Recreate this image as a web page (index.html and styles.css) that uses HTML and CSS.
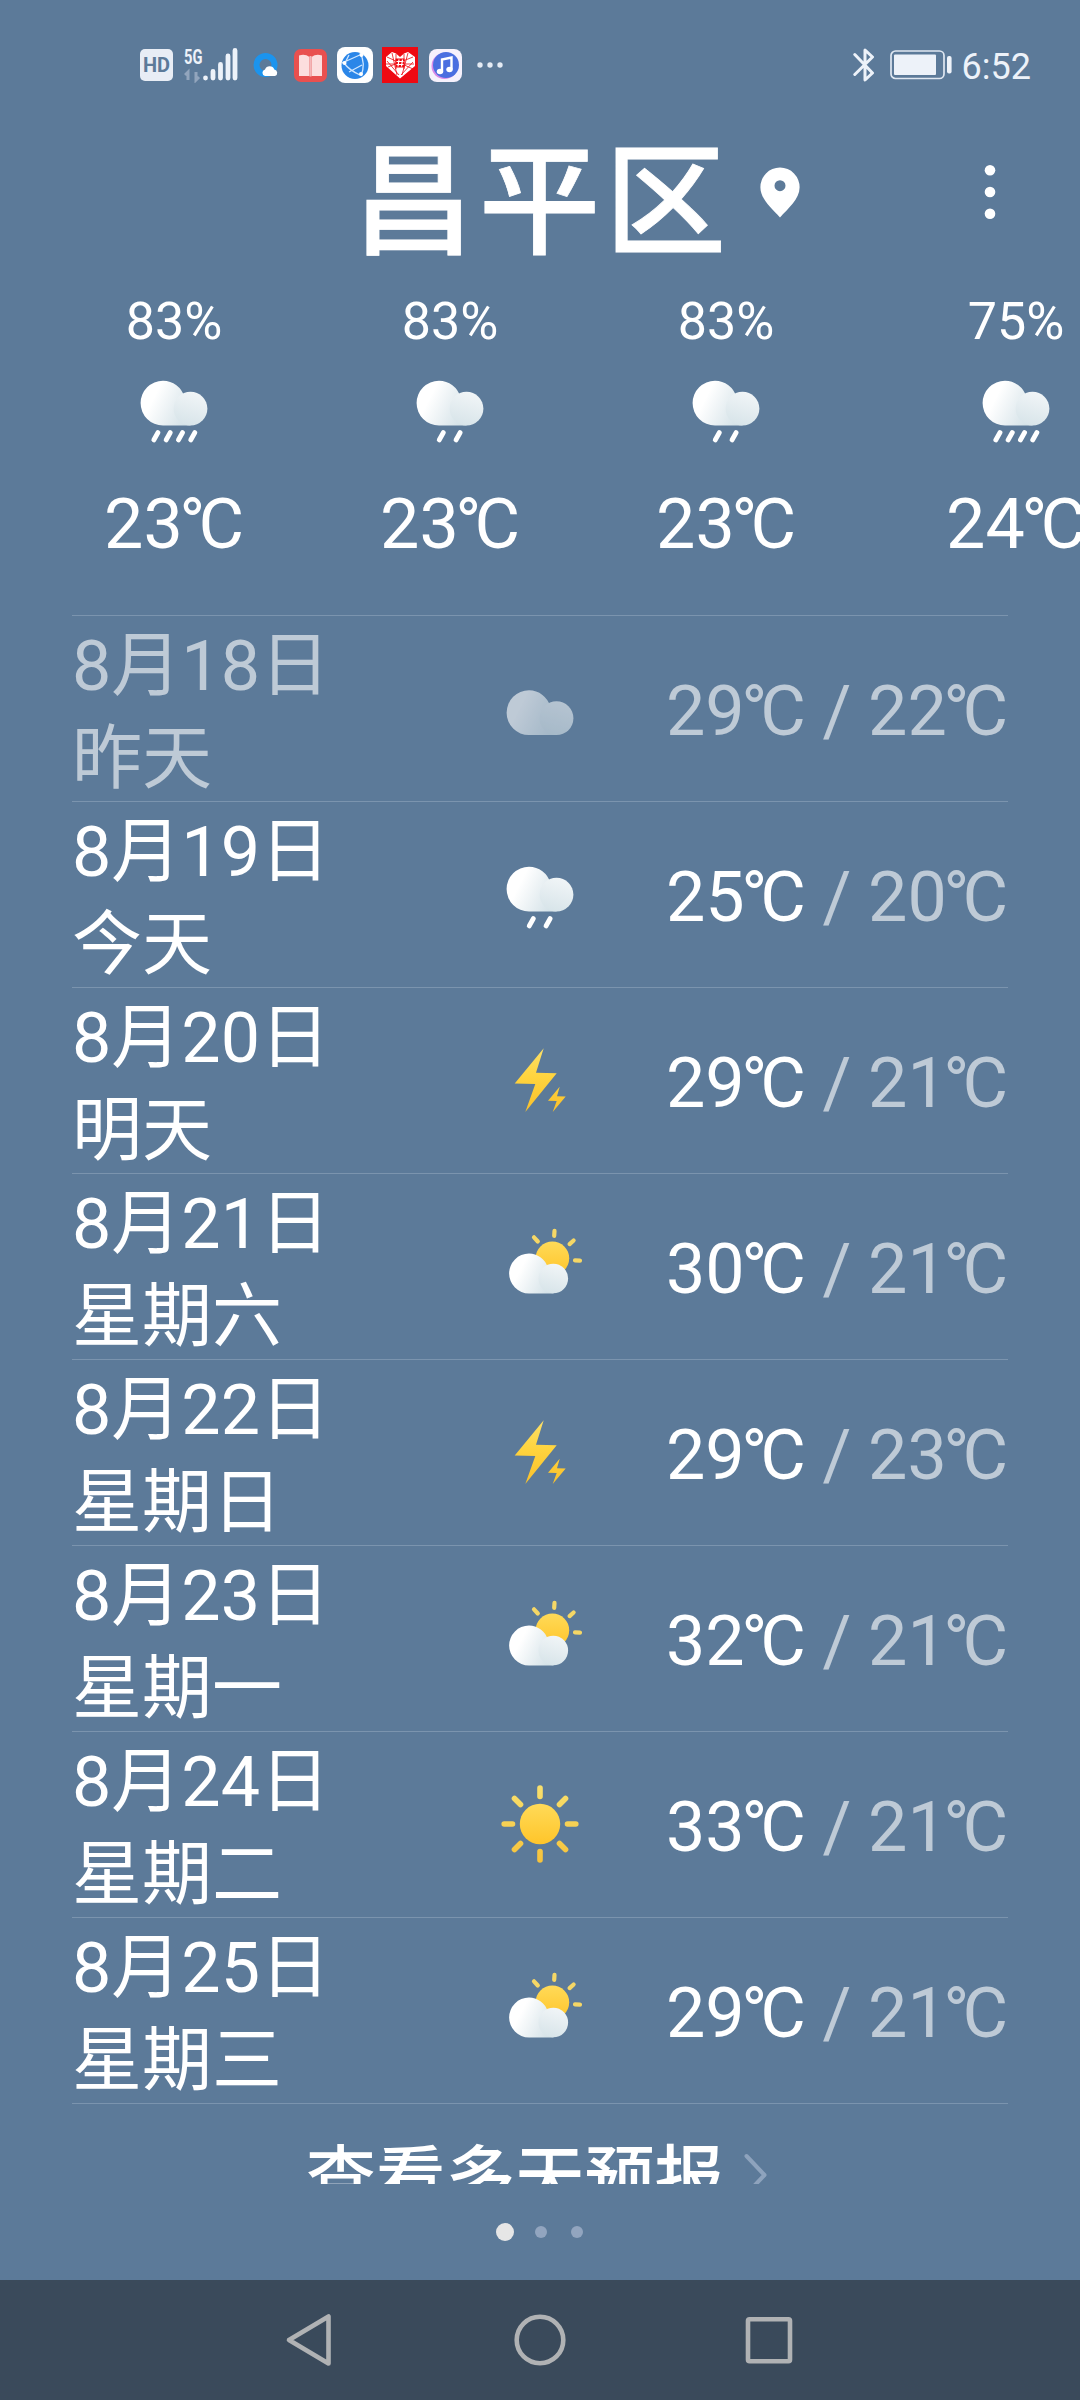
FILE: index.html
```html
<!DOCTYPE html>
<html lang="zh-CN">
<head>
<meta charset="utf-8">
<title>昌平区</title>
<link rel="stylesheet" href="styles.css">
</head>
<body>
<svg class="defs" width="0" height="0" aria-hidden="true">
  <defs>
    <linearGradient id="gMain" x1="0" y1="0.3" x2="1" y2="0.75"><stop offset="0.25" stop-color="#fff"/><stop offset="1" stop-color="#d3e1e7"/></linearGradient>
    <linearGradient id="gSmall" x1="0.6" y1="0" x2="0.3" y2="1"><stop offset="0" stop-color="#f1f5f7"/><stop offset="1" stop-color="#d7e4e9"/></linearGradient>
    <linearGradient id="gSun" x1="0" y1="0" x2="0" y2="1"><stop offset="0" stop-color="#ffda58"/><stop offset="1" stop-color="#ffc52a"/></linearGradient>
    <linearGradient id="gBolt" gradientUnits="userSpaceOnUse" x1="0" y1="16" x2="0" y2="80"><stop offset="0" stop-color="#fbe06a"/><stop offset="0.45" stop-color="#ffd43e"/><stop offset="1" stop-color="#f9c02c"/></linearGradient>
    <linearGradient id="gRays" gradientUnits="userSpaceOnUse" x1="0" y1="9" x2="0" y2="87"><stop offset="0" stop-color="#f8e06e"/><stop offset="1" stop-color="#f6c23a"/></linearGradient>
  </defs>
  <symbol id="cloud" viewBox="0 0 96 96">
    <path d="M37 20.7a22.4 22.4 0 0 0 0 44.8H64.5V48.5L58.4 37A22.4 22.4 0 0 0 37 20.7z" fill="url(#gMain)"/>
    <circle cx="64.5" cy="48.6" r="16.9" fill="url(#gSmall)"/>
  </symbol>
  <symbol id="overcast" viewBox="0 0 96 96"><use href="#cloud" y="9.6" width="96" height="96"/></symbol>
  <symbol id="light-rain" viewBox="0 0 96 96">
    <use href="#cloud" width="96" height="96"/>
    <path d="M41.4 72.5l-4.2 7.5M58.2 72.5l-4.2 7.5" stroke="#fff" stroke-width="4.8" stroke-linecap="round"/>
  </symbol>
  <symbol id="rain" viewBox="0 0 96 96">
    <use href="#cloud" width="96" height="96"/>
    <path d="M32 72.5l-4.2 7.5M44.3 72.5l-4.2 7.5M56.6 72.5l-4.2 7.5M68.9 72.5l-4.2 7.5" stroke="#fff" stroke-width="4.8" stroke-linecap="round"/>
  </symbol>
  <symbol id="bolt" viewBox="0 0 96 96">
    <path d="M51.7 16.3L44 40.7l20.7.6L33.3 80l10-28L22.7 51.5zM67.7 54.7L65 64.3l8.7.3L60.7 80l4-11-8.7-.3z" fill="url(#gBolt)"/>
  </symbol>
  <symbol id="partly" viewBox="0 0 96 96">
    <path d="M62.5 12.8l-.3 5M42 19.3l3.8 4.2M81.6 22.5l-4 3.6M83 42.3l5 .4" stroke="#f5d766" stroke-width="4.2" stroke-linecap="round"/>
    <circle cx="60.4" cy="40.3" r="16.8" fill="url(#gSun)"/>
    <path d="M37 35.6a19.9 19.9 0 0 0 0 39.8H61.5V60.5L55.6 49A19.9 19.9 0 0 0 37 35.6z" fill="url(#gMain)"/>
    <circle cx="61.3" cy="60.5" r="14.8" fill="url(#gSmall)"/>
  </symbol>
  <symbol id="sunny" viewBox="0 0 96 96">
    <circle cx="48" cy="48" r="20.2" fill="url(#gSun)"/>
    <path d="M48.01 12L48 20.5M48.01 75.5L48 84M12.2 48h8.3M75.5 48h8.3M22.5 22.5l6 6M73.5 22.5l-6 6M22.5 73.5l6-6M73.5 73.5l-6-6" stroke="url(#gRays)" stroke-width="5.6" stroke-linecap="round"/>
  </symbol>
</svg>

<div class="screen">
  <div class="status">
    <span class="hd">HD</span>
    <span class="net">
      <span class="net-type">5G</span>
      <svg class="signal" width="54" height="36" viewBox="0 0 54 36"><path d="M4 33v-8l-3 3M12 25v8l3-3" fill="none" stroke="#92a5bd" stroke-width="3"/><path d="M22.5 31v.1M30 24.5v6.5M37.5 17.5v13.5M45 9v22M52 3.5v27.5" transform="translate(-1)" stroke="#edf2f9" stroke-width="4.8" stroke-linecap="round"/></svg>
    </span>
    <svg class="app app-search" width="26" height="26" viewBox="0 0 26 26"><circle cx="12.5" cy="13" r="9" fill="none" stroke="#1b94ee" stroke-width="6"/><path d="M12 24a3.4 3.4 0 0 1 0-6.6 5 5 0 0 1 9.3.2A3.3 3.3 0 0 1 22 24z" fill="#fff"/></svg>
    <svg class="app app-book" width="33" height="33" viewBox="0 0 33 33"><rect width="33" height="33" rx="7" fill="#e9504f"/><path d="M5 6.5q6-2 10.5 1.5v19H5zM28 6.5q-6-2-10.5 1.5v19H28z" fill="#fcdede"/><path d="M15.5 7h2v20.5h-2z" fill="#f3b7b9"/></svg>
    <svg class="app app-browser" width="36" height="36" viewBox="0 0 36 36"><rect width="36" height="36" rx="8" fill="#fff"/><circle cx="18" cy="18.5" r="13.5" fill="#2b86e8"/><path d="M5 16L25 7M7 16q5 7 16 12M23 6q6 10 1 23M12 25l13-7M12 8l-4 8" fill="none" stroke="#cfe6ff" stroke-width="1.3"/><g fill="#fff"><circle cx="7.5" cy="16" r="2"/><circle cx="24.5" cy="8" r="2"/><circle cx="24" cy="27" r="2"/></g></svg>
    <svg class="app app-heart" width="36" height="36" viewBox="0 0 36 36"><rect width="36" height="36" fill="#ee0a12"/><path d="M18 31.5L4 19V10l6-5 4 1.5 4 3.5 4-3.5L26 5l7 5v9z" fill="#fff"/><path d="M5 14l12 14M5 10l26 12M31 10L6 20M31 15L19 28M10 6l5 22M26 6l-6 22M14 7v15M22 7v15M4 17h28" stroke="#ee0a12" stroke-width="0.8"/><path d="M13.5 11.5h9v9h-9z" fill="#ee0a12"/><path d="M17 12.5l-1 7M20.5 12.5l-1 7M14.5 14.5h7M14.5 17.5h7" stroke="#fff" stroke-width="1.2"/></svg>
    <svg class="app app-music" width="33" height="33" viewBox="0 0 33 33"><rect width="33" height="33" rx="8" fill="#f6f1fc"/><circle cx="15.5" cy="17" r="13" fill="#d88ae8"/><circle cx="17" cy="16" r="13" fill="#4a6fe0"/><path d="M13 22.5V10.5l9.5-2v12" fill="none" stroke="#fff" stroke-width="2.4"/><ellipse cx="11" cy="22.5" rx="3.2" ry="2.8" fill="#fff"/><ellipse cx="20.5" cy="20.5" rx="3.2" ry="2.8" fill="#fff"/></svg>
    <svg class="more" width="26" height="6" viewBox="0 0 26 6" fill="#e4ebf4"><circle cx="3" cy="3" r="2.7"/><circle cx="13" cy="3" r="2.7"/><circle cx="23" cy="3" r="2.7"/></svg>
    <span class="spacer"></span>
    <svg class="bt" width="22" height="36" viewBox="0 0 22 36" fill="none" stroke="#edf2f9" stroke-width="3" stroke-linecap="round" stroke-linejoin="round"><path d="M1.8 7.5L19.5 26 12 33V3l7.5 7L1.8 27.5"/></svg>
    <svg class="battery" width="62" height="30" viewBox="0 0 62 30"><rect x="1" y="1" width="53" height="27.5" rx="4.5" fill="none" stroke="#dfe7f1" stroke-width="1.7"/><rect x="4" y="4.5" width="42" height="20.5" rx="1" fill="#edf2f9"/><rect x="57" y="6" width="4.6" height="17.5" rx="2" fill="#edf2f9"/></svg>
    <span class="clock">6:52</span>
  </div>

  <div class="header">
    <h1 class="city">昌平区</h1>
    <svg class="pin" width="40" height="51" viewBox="0 0 40 51"><path fill="#fff" fill-rule="evenodd" d="M20 .5A19.6 19.6 0 0 0 .4 20.5C.4 32 12 41.5 20 50.5 28 41.5 39.6 32 39.6 20.5A19.6 19.6 0 0 0 20 .5zM20 13.2a5.5 5.5 0 1 1 0 11 5.5 5.5 0 0 1 0-11z"/></svg>
    <svg class="menu" width="12" height="56" viewBox="0 0 12 56" fill="#fff"><circle cx="6" cy="6.3" r="5.3"/><circle cx="6" cy="28" r="5.3"/><circle cx="6" cy="49.7" r="5.3"/></svg>
  </div>

  <div class="hourly">
    <div class="hour"><span class="chance">83%</span><svg class="wx"><use href="#rain"/></svg><span class="deg">23<span class="unit">°C</span></span></div>
    <div class="hour"><span class="chance">83%</span><svg class="wx"><use href="#light-rain"/></svg><span class="deg">23<span class="unit">°C</span></span></div>
    <div class="hour"><span class="chance">83%</span><svg class="wx"><use href="#light-rain"/></svg><span class="deg">23<span class="unit">°C</span></span></div>
    <div class="hour hour-wide"><span class="chance">75%</span><svg class="wx"><use href="#rain"/></svg><span class="deg">24<span class="unit">°C</span></span></div>
  </div>

  <div class="daily">
    <div class="day past"><div class="date">8月18日<br>昨天</div><svg class="wx"><use href="#overcast"/></svg><div class="range">29<span class="unit">°C</span><span class="low"> / 22<span class="unit">°C</span></span></div></div>
    <div class="day"><div class="date">8月19日<br>今天</div><svg class="wx"><use href="#light-rain"/></svg><div class="range">25<span class="unit">°C</span><span class="low"> / 20<span class="unit">°C</span></span></div></div>
    <div class="day"><div class="date">8月20日<br>明天</div><svg class="wx"><use href="#bolt"/></svg><div class="range">29<span class="unit">°C</span><span class="low"> / 21<span class="unit">°C</span></span></div></div>
    <div class="day"><div class="date">8月21日<br>星期六</div><svg class="wx"><use href="#partly"/></svg><div class="range">30<span class="unit">°C</span><span class="low"> / 21<span class="unit">°C</span></span></div></div>
    <div class="day"><div class="date">8月22日<br>星期日</div><svg class="wx"><use href="#bolt"/></svg><div class="range">29<span class="unit">°C</span><span class="low"> / 23<span class="unit">°C</span></span></div></div>
    <div class="day"><div class="date">8月23日<br>星期一</div><svg class="wx"><use href="#partly"/></svg><div class="range">32<span class="unit">°C</span><span class="low"> / 21<span class="unit">°C</span></span></div></div>
    <div class="day"><div class="date">8月24日<br>星期二</div><svg class="wx"><use href="#sunny"/></svg><div class="range">33<span class="unit">°C</span><span class="low"> / 21<span class="unit">°C</span></span></div></div>
    <div class="day"><div class="date">8月25日<br>星期三</div><svg class="wx"><use href="#partly"/></svg><div class="range">29<span class="unit">°C</span><span class="low"> / 21<span class="unit">°C</span></span></div></div>
  </div>

  <div class="forecast-link">
    <span class="link-text">查看多天预报</span>
    <svg class="chevron" width="24" height="44" viewBox="0 0 24 44"><path d="M2.5 3L20.5 22 2.5 41" fill="none" stroke="#8ea3bd" stroke-width="4" stroke-linecap="round" stroke-linejoin="round"/></svg>
  </div>

  <div class="pager"><i class="dot current"></i><i class="dot"></i><i class="dot"></i></div>

  <div class="navbar">
    <svg class="back" width="48" height="56" viewBox="0 0 48 56"><path d="M43.5 4.5v47L4 28z"/></svg>
    <svg class="home" width="56" height="56" viewBox="0 0 56 56"><circle cx="28" cy="28" r="23.3"/></svg>
    <svg class="recent" width="56" height="56" viewBox="0 0 56 56"><rect x="7" y="7.2" width="42" height="42" rx="1.5"/></svg>
  </div>
</div>
</body>
</html>
```
FILE: styles.css
```css
* { box-sizing: border-box; }

body {
  margin: 0;
  background: #5c7a99;
  color: #fff;
  font-family: Roboto, "Noto Sans CJK SC", sans-serif;
}

.defs { position: absolute; }

.screen {
  width: 1080px;
  height: 2400px;
  display: flex;
  flex-direction: column;
  overflow: hidden;
}

/* status bar */
.status {
  height: 130px;
  padding: 0 49px 0 140px;
  display: flex;
  align-items: center;
  color: #edf2f9;
}
.status svg { flex: none; }
.hd {
  width: 33px;
  height: 32px;
  border-radius: 5px;
  background: #e8edf5;
  color: #5c7a99;
  font: 700 20px/33px Roboto, sans-serif;
  text-align: center;
}
.net {
  display: flex;
  flex-direction: column;
  width: 54px;
  margin-left: 11px;
  height: 36px;
}
.net-type {
  height: 0;
  font: 700 21px/20px Roboto, sans-serif;
  transform: scaleX(0.7);
  transform-origin: left top;
}
.signal { display: block; }
.app-search { margin-left: 15px; }
.app-book { margin-left: 15px; }
.app-browser { margin-left: 10px; }
.app-heart { margin-left: 9px; }
.app-music { margin-left: 11px; }
.more { margin-left: 15px; }
.spacer { flex: 1; }
.battery { margin-left: 15px; }
.clock { margin-left: 10px; font-size: 36px; line-height: 56px; padding-top: 3px; }

/* city header */
.header {
  height: 150px;
  padding: 0 84px 26px 353px;
  display: flex;
  align-items: center;
}
.city {
  margin: 0;
  padding-top: 21px;
  font-size: 121px;
  line-height: 124px;
  letter-spacing: 5px;
  font-weight: 500;
  -webkit-text-stroke: 0.8px #fff;
}
.pin { margin-left: 29px; }
.menu { margin-left: auto; }

/* hourly strip */
.hourly {
  height: 335px;
  padding-left: 36px;
  display: flex;
}
.hour {
  flex: none;
  width: 276px;
  display: flex;
  flex-direction: column;
  align-items: center;
}
.hour-wide { width: 304px; }
.wx { width: 96px; height: 96px; display: block; }
.chance { font-size: 52px; line-height: 77px; padding-top: 3px; }
.deg { font-size: 70px; line-height: 92px; margin-top: 22px; }

/* the degree ring tucks in against the C */
.unit { margin: 0 7px 0 -3.5px; letter-spacing: -7px; }

/* daily list */
.daily {
  margin: 0 72px;
  border-top: 1px solid #7b94ae;
}
.day {
  height: 186px;
  border-bottom: 1px solid #7b94ae;
  display: grid;
  grid-template-columns: 1fr 96px 1fr;
  grid-template-rows: 185px;
  align-items: center;
  font-size: 70px;
  line-height: 92px;
}
.day .wx { margin-top: -1px; }
.date { align-self: start; line-height: 93px; padding-top: 4px; }
.range { text-align: right; white-space: nowrap; padding-top: 4px; word-spacing: -0.7px; }
.low { opacity: 0.6; }
.past .date, .past .wx, .past .range { opacity: 0.6; }
.past .low { opacity: 1; }

/* link cut off by the bottom of the scroll area */
.forecast-link {
  height: 80px;
  overflow: hidden;
  padding: 30px 0 0 306px;
  display: flex;
  align-items: flex-start;
}
.link-text { font-size: 69.7px; line-height: 90px; font-weight: 500; }
.chevron { margin: 19px 0 0 20px; }

.pager {
  height: 96px;
  padding-left: 496px;
  display: flex;
  align-items: center;
}
.dot { width: 12px; height: 12px; border-radius: 50%; background: #92a5bf; margin-right: 24px; }
.current { width: 18px; height: 18px; background: #e6e6e6; margin-right: 21px; }

.navbar {
  height: 120px;
  padding-left: 285px;
  background: #3a4a5b;
  display: flex;
  align-items: center;
}
.navbar svg { fill: none; stroke: #b0b2b4; stroke-width: 4.6; stroke-linejoin: round; }
.home { margin-left: 179px; }
.recent { margin-left: 173px; }
```
